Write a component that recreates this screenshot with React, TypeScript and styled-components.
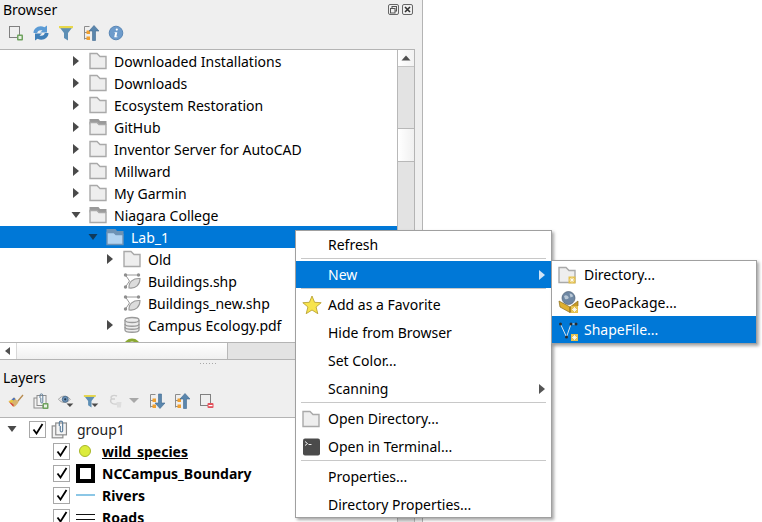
import React from 'react';
import styled, { createGlobalStyle } from 'styled-components';

const GlobalStyle = createGlobalStyle`
  html, body {
    margin: 0;
    padding: 0;
    background: #fff;
  }
  body {
    font-family: 'Noto Sans', 'Open Sans', sans-serif;
    font-size: 14px;
    color: #000;
  }
`;

const Tri = ({ dir = 'right', color = '#4a4a4a' }: { dir?: 'right' | 'down' | 'up' | 'left'; color?: string }) => {
  const pts = {
    right: '1,0 7,5 1,10',
    down: '0.5,1 9.5,1 5,7',
    up: '0.5,6.500 9.500,6.500 5,1.500',
    left: '6,1 1,5 6,9',
  }[dir];
  const horizontal = dir === 'down' || dir === 'up';
  return (
    <svg width={horizontal ? 10 : 8} height={horizontal ? 8 : 10} viewBox={horizontal ? '0 0 10 8' : '0 0 8 10'}>
      <polygon points={pts} fill={color} />
    </svg>
  );
};

const Badge = ({ x, y }: { x: number; y: number }) => (
  <g transform={`translate(${x} ${y})`}>
    <rect width="7" height="7" fill="#e4c04c" />
    <path d="M3.500 1v5M1 3.500h5M1.800 1.800l3.400 3.400M5.200 1.800l-3.400 3.400" stroke="#fff" strokeWidth="0.8" />
  </g>
);

const FolderIcon = ({ badge }: { badge?: boolean }) => (
  <svg width="18" height="18" viewBox="0 0 18 18">
    <path d="M1 1.500h7l3 3h6v12H1z" fill="#eeeeee" stroke="#a9a9a9" strokeWidth="1.400" />
    {badge && <Badge x={10.500} y={10.500} />}
  </svg>
);

const ProjectFolderIcon = ({ selected }: { selected?: boolean }) => (
  <svg width="18" height="18" viewBox="0 0 18 18">
    <path d="M0.500 1h9l1.500 2H17.500v3.500H.5z" fill={selected ? '#6f93b5' : '#9a9a9a'} />
    <path
      d="M1 4.500h7l2 2h7v10H1z"
      fill={selected ? '#b2d3f0' : '#eeeeee'}
      stroke={selected ? '#6f93b5' : '#a9a9a9'}
      strokeWidth="1.400"
    />
  </svg>
);

const ShapeIcon = () => (
  <svg width="18" height="18" viewBox="0 0 18 18">
    <path d="M2.500 3h13M2.500 3l4 6-4 6" fill="none" stroke="#9a9a9a" strokeWidth="1" />
    <path d="M6 16c-.5-6 4-10 11-9.500 0 6-4 10.500-11 9.500z" fill="#dcdcdc" stroke="#9a9a9a" strokeWidth="1.100" />
    <circle cx="2.500" cy="3" r="1.700" fill="#8f8f8f" />
    <circle cx="15.500" cy="3" r="1.700" fill="#8f8f8f" />
    <circle cx="2.500" cy="15" r="1.700" fill="#8f8f8f" />
  </svg>
);

const DbIcon = () => (
  <svg width="18" height="18" viewBox="0 0 18 18" fill="#ececec" stroke="#9a9a9a" strokeWidth="1.300">
    <path d="M2 4v10c0 3 14 3 14 0V4" />
    <ellipse cx="9" cy="4" rx="7" ry="2.500" />
    <path d="M2 8c0 3 14 3 14 0M2 11c0 3 14 3 14 0" fill="none" />
  </svg>
);

const GreenIcon = () => (
  <svg width="18" height="18" viewBox="0 0 18 18">
    <circle cx="9" cy="9" r="7" fill="none" stroke="#8aa832" strokeWidth="3" />
  </svg>
);

const AddLayerIcon = () => (
  <svg width="16" height="16" viewBox="0 0 16 16">
    <rect x="1.500" y="1.500" width="10" height="11" fill="none" stroke="#808080" />
    <rect x="9" y="9.500" width="6" height="6" rx="1" fill="#6fa35f" />
    <rect x="10.500" y="11" width="3" height="3" fill="#e9f2e5" />
  </svg>
);

const RefreshIcon = () => (
  <svg width="16" height="16" viewBox="0 0 16 16">
    <path d="M.5 8C.5 3 6 -.5 11.500 2.200L14 .5V7.500H7l2.500-2C6.500 4.500 4.500 6 4.200 8z" fill="#5b9bd5" />
    <path d="M15.500 8c0 5-5.500 8.500-11 5.800L2 15.500V8.500h7l-2.500 2c3 1 5-.5 5.300-2.500z" fill="#3f7fb8" />
  </svg>
);

const FilterIcon = ({ menu }: { menu?: boolean }) => (
  <svg width={menu ? 20 : 16} height="16" viewBox={menu ? '0 0 20 16' : '0 0 16 16'}>
    <path d="M1 1.500h14L10 8v7.500l-4-2.500V8z" fill="#5e8fb5" />
    <rect x="1" y="1" width="14" height="2.200" fill="#e8d84a" />
    {menu && <polygon points="10,11 18,11 14,15" fill="#4a4a4a" />}
  </svg>
);

const TreeArrowIcon = ({ down }: { down?: boolean }) => (
  <svg width="16" height="16" viewBox="0 0 16 16">
    <path d="M1.500 1.500h5M1.500 1.500v13M1.500 7.500h3M1.500 13.500h3" fill="none" stroke="#8c8c8c" />
    <rect x="3.500" y="5.500" width="3.500" height="3.500" fill="#f0a030" />
    <rect x="3.500" y="11.500" width="3.500" height="3.500" fill="#f0a030" />
    <path
      d={down ? 'M9.500 1h3v9H16l-5 5.500-5-5.500h3.500z' : 'M9.500 15.500h3V6H16L11 .5 6 6h3.500z'}
      fill="#5a86ad"
      stroke="#3f6a90"
      strokeWidth="0.600"
    />
  </svg>
);

const InfoIcon = () => (
  <svg width="16" height="16" viewBox="0 0 16 16">
    <circle cx="8" cy="8" r="6.800" fill="#6d9bcb" stroke="#5a87b6" />
    <circle cx="8.800" cy="4.600" r="1.100" fill="#fff" />
    <path d="M7 7.200h2.300l-.9 4.200h1v.8H6.200l.9-4.200h-.9z" fill="#fff" />
  </svg>
);

const BrushIcon = () => (
  <svg width="16" height="16" viewBox="0 0 16 16">
    <path d="M9 8l5.500-6.500 1 1L10 9z" fill="#b78a4e" />
    <path d="M.5 8c2 0 4.500-2 5.500-3.500l4.500 4.500c-1 2-3.500 5-5 5z" fill="#d7b36f" />
    <path d="M.5 8c2 0 4.500-2 5.500-3.500l1.500 1.500C6 8 4 9.500 2.500 10z" fill="#e8c83c" />
    <path d="M1 9l2.500 1 2.500 2-1 1.500z" fill="#d8443c" />
    <path d="M3.500 6.500l2.500-2 1.500 1.500-2 1.500z" fill="#4a6fc0" />
  </svg>
);

const GroupIcon = ({ plus, size = 16 }: { plus?: boolean; size?: number }) => (
  <svg width={size} height={size} viewBox="0 0 16 16">
    <rect x="1" y="5" width="9" height="10" fill="#f2f2f2" stroke="#8c8c8c" />
    <rect x="4" y="2.500" width="9" height="10" fill="#f5f5f5" stroke="#8c8c8c" />
    <path d="M7 5V2.300a1.400 1.400 0 0 1 2.800 0V9a1 1 0 0 1-2 0V5" fill="none" stroke="#5f7f9c" strokeWidth="1" />
    {plus && (
      <g>
        <rect x="9.500" y="10" width="6" height="6" rx="1" fill="#6fa35f" />
        <rect x="11" y="11.500" width="3" height="3" fill="#e9f2e5" />
      </g>
    )}
  </svg>
);

const EyeIcon = () => (
  <svg width="20" height="16" viewBox="0 0 20 16">
    <path d="M.5 6c4-5 10-5 14 0-4 5-10 5-14 0z" fill="#e5e5e5" stroke="#9a9a9a" />
    <circle cx="8.500" cy="6" r="3.500" fill="#6d93b8" stroke="#47698a" />
    <circle cx="8.500" cy="6" r="1.300" fill="#24384c" />
    <polygon points="10,11 18,11 14,15" fill="#4a4a4a" />
  </svg>
);

const ExprIcon = () => (
  <svg width="32" height="16" viewBox="0 0 32 16">
    <path d="M9 3C5 1.500 2 3 3.500 6H7M3.500 6C1.500 8 3 12 9 11" fill="none" stroke="#cfcfcf" strokeWidth="1.400" />
    <path d="M8.500 9h5l-.6 5.500H9.100z" fill="#dedede" />
    <polygon points="21,5 31,5 26,10" fill="#a8a8a8" />
  </svg>
);

const RemoveIcon = () => (
  <svg width="16" height="16" viewBox="0 0 16 16">
    <rect x="1.500" y="1.500" width="10" height="11" fill="none" stroke="#808080" />
    <rect x="8.500" y="10" width="6" height="5" rx="1" fill="#e2525c" />
    <rect x="9.500" y="12" width="4" height="1.200" fill="#fff" />
  </svg>
);

const StarIcon = () => (
  <svg width="20" height="20" viewBox="0 0 20 20">
    <polygon
      points="10,1 12.600,7.300 19.200,7.700 14.100,12 15.800,18.700 10,15 4.200,18.700 5.900,12 .8,7.700 7.400,7.300"
      fill="#f7e44e"
      stroke="#b39a2a"
      strokeWidth="0.800"
    />
  </svg>
);

const TerminalIcon = () => (
  <svg width="19" height="18" viewBox="0 0 19 18">
    <rect x="1" y="0.500" width="17" height="17" rx="2" fill="#4b4b4b" />
    <path d="M3 3.500l2.500 2-2.500 2" fill="none" stroke="#fff" strokeWidth="0.900" />
    <path d="M6.500 6.500h3" stroke="#fff" strokeWidth="0.900" />
  </svg>
);

const CheckMark = () => (
  <svg width="12" height="12" viewBox="0 0 12 12">
    <path d="M1.500 6.500L4.500 10.500L10.500 1" fill="none" stroke="#000" strokeWidth="1.800" />
  </svg>
);

const GeoPackageIcon = () => (
  <svg width="22" height="22" viewBox="0 0 22 22">
    <circle cx="10.500" cy="7" r="6.500" fill="#6e87a3" stroke="#4f6075" strokeWidth="0.700" />
    <path d="M6 5c2-1.500 3.500-.5 4.500 1s-1.500 3-3.500 2zM11.500 2.500c2 0 3.500 1 3.500 3l-2.500 1z" fill="#b9c8d6" />
    <polygon points="1,10 12,16 12,21.500 2,16" fill="#e0b030" stroke="#8a6c1a" strokeWidth="0.700" />
    <polygon points="12,16 20,10 20,15 12,21.500" fill="#c89a26" stroke="#8a6c1a" strokeWidth="0.700" />
    <Badge x={13} y={15} />
  </svg>
);

const NewShapeIcon = () => (
  <svg width="22" height="22" viewBox="0 0 22 22">
    <path d="M2.500 5l6 13L13 5h5" fill="none" stroke="#d7e3ee" strokeWidth="1" />
    <circle cx="2.500" cy="5" r="1.500" fill="#2b2b2b" />
    <circle cx="8.500" cy="18" r="1.500" fill="#2b2b2b" />
    <circle cx="13" cy="5" r="1.500" fill="#2b2b2b" />
    <circle cx="18" cy="5" r="1.500" fill="#2b2b2b" />
    <Badge x={13} y={15} />
  </svg>
);

const Page = styled.div`
  position: relative;
  width: 762px;
  height: 522px;
  overflow: hidden;
  background: #fff;
`;

const Dock = styled.div`
  width: 422px;
  height: 522px;
  background: #efefef;
  border-right: 1px solid #b4b4b4;
  display: flex;
  flex-direction: column;
`;

const TitleRow = styled.div`
  height: 19px;
  padding: 0 9px 0 3px;
  display: flex;
  align-items: center;
  justify-content: space-between;
  line-height: 19px;
`;

const FloatButtons = styled.div`
  display: flex;
  gap: 3px;
  margin-top: -1px;
`;

const Toolbar = styled.div<{ $gap: number }>`
  box-sizing: border-box;
  height: 30px;
  padding: 0 0 2px 8px;
  display: flex;
  align-items: center;
  gap: ${p => p.$gap}px;
`;

const ToolSlot = styled.span<{ $w: number }>`
  width: ${p => p.$w}px;
  height: 16px;
  flex: none;
  display: flex;
`;

const BrowserArea = styled.div`
  height: 310px;
  margin-right: 7px;
  border-top: 1px solid #b4b4b4;
  border-right: 1px solid #b4b4b4;
  background: #fff;
  display: flex;
  flex-direction: column;
`;

const TreeWithBar = styled.div`
  flex: 1;
  min-height: 0;
  display: flex;
`;

const Tree = styled.div`
  flex: 1;
  overflow: hidden;
  min-width: 0;
`;

const Row = styled.div<{ $depth: number; $selected?: boolean }>`
  height: 22px;
  display: flex;
  align-items: center;
  padding-left: ${p => p.$depth}px;
  white-space: nowrap;
  background: ${p => (p.$selected ? '#0078d7' : 'transparent')};
  color: ${p => (p.$selected ? '#fff' : '#000')};
`;

const Arrow = styled.span`
  width: 14px;
  flex: none;
  display: flex;
  justify-content: center;
`;

const RowIcon = styled.span`
  width: 18px;
  height: 18px;
  flex: none;
  margin: 0 7px 0 6px;
  display: flex;
`;

const VBar = styled.div`
  width: 16px;
  flex: none;
  background: #e3e3e3;
  border-left: 1px solid #b8b8b8;
  display: flex;
  flex-direction: column;
`;

const BarButton = styled.div`
  width: 16px;
  height: 16px;
  flex: none;
  background: linear-gradient(90deg, #fff, #f2f2f2);
  border-bottom: 1px solid #c4c4c4;
  display: flex;
  align-items: center;
  justify-content: center;
`;

const VThumb = styled.div`
  height: 32px;
  margin-top: 61px;
  background: linear-gradient(90deg, #fff, #f0f0f0);
  border-top: 1px solid #b8b8b8;
  border-bottom: 1px solid #b8b8b8;
`;

const HBar = styled.div`
  height: 16px;
  flex: none;
  border-top: 1px solid #b4b4b4;
  border-bottom: 1px solid #b4b4b4;
  background: #e3e3e3;
  display: flex;
`;

const HArrow = styled.div`
  width: 16px;
  background: #fff;
  display: flex;
  align-items: center;
  justify-content: center;
`;

const HThumb = styled.div`
  width: 210px;
  background: linear-gradient(180deg, #fff, #f0f0f0);
  border-left: 1px solid #d8d8d8;
  border-right: 1px solid #b8b8b8;
`;

const Splitter = styled.div`
  box-sizing: border-box;
  height: 8px;
  padding: 3px 206px 0 0;
  display: flex;
  justify-content: flex-end;
  align-items: flex-start;
`;

const GripDots = styled.div`
  width: 16px;
  height: 1px;
  background: repeating-linear-gradient(90deg, #a8a8a8 0 1px, transparent 1px 3px);
`;

const LayerTree = styled.div`
  flex: 1;
  min-height: 0;
  margin-right: 7px;
  border-top: 1px solid #b4b4b4;
  border-right: 1px solid #b4b4b4;
  background: #fff;
  overflow: hidden;
  display: flex;
`;

const LayerList = styled.div`
  flex: 1;
  min-width: 0;
`;

const Check = styled.span`
  width: 15px;
  height: 15px;
  flex: none;
  border: 1px solid #a8a8a8;
  background: #fff;
  display: flex;
  align-items: center;
  justify-content: center;
`;

const GroupLabel = styled.span`
  color: #222;
`;

const LayerLabel = styled.span<{ $current?: boolean }>`
  font-weight: 700;
  text-decoration: ${p => (p.$current ? 'underline' : 'none')};
`;

const LegendSlot = styled.span<{ $w: number }>`
  width: ${p => p.$w}px;
  height: 20px;
  flex: none;
  margin: 0 7px 0 5px;
  display: flex;
  align-items: center;
  justify-content: center;
`;

const LayerRow = styled.div<{ $indent: number }>`
  height: 22px;
  display: flex;
  align-items: center;
  padding-left: ${p => p.$indent}px;
  white-space: nowrap;
`;

const CheckGap = styled.span`
  width: 10px;
  flex: none;
`;

const Dot = styled.span`
  width: 10px;
  height: 10px;
  border-radius: 50%;
  background: #dcec3c;
  border: 1px solid #a8b62a;
`;

const Square = styled.span`
  width: 11px;
  height: 11px;
  border: 4px solid #000;
  background: #fff;
`;

const LineSwatch = styled.span`
  width: 19px;
  height: 2px;
  background: #8cc7e6;
`;

const DoubleLine = styled.span`
  width: 19px;
  height: 4px;
  border-top: 1px solid #111;
  border-bottom: 1px solid #111;
`;

const Menu = styled.div<{ $left: number; $top: number; $width: number; $height?: number }>`
  position: absolute;
  left: ${p => p.$left}px;
  top: ${p => p.$top}px;
  width: ${p => p.$width}px;
  height: ${p => (p.$height ? `${p.$height}px` : 'auto')};
  box-sizing: border-box;
  overflow: hidden;
  background: #fff;
  border: 1px solid #a0a0a0;
  box-shadow: 2px 2px 3px rgba(0, 0, 0, 0.35);
`;

const Item = styled.div<{ $active?: boolean; $height?: number; $lift?: number }>`
  box-sizing: border-box;
  height: ${p => p.$height ?? 28}px;
  display: flex;
  align-items: center;
  padding: 0 0 ${p => p.$lift ?? 2}px 32px;
  position: relative;
  white-space: nowrap;
  background: ${p => (p.$active ? '#0078d7' : 'transparent')};
  color: ${p => (p.$active ? '#fff' : '#000')};
`;

const ItemIcon = styled.span`
  position: absolute;
  left: 6px;
  top: 50%;
  transform: translateY(-50%);
  display: flex;
`;

const SubArrow = styled.span`
  position: absolute;
  right: 5px;
  top: 50%;
  transform: translateY(-50%);
  display: flex;
`;

const SepBox = styled.div`
  position: relative;
  height: 3px;
  margin-top: -1px;
  padding: 0 5px;
  background: #fff;
`;

const SepLine = styled.div`
  height: 1px;
  background: #c8c8c8;
`;

const folderRows = [
  ['Downloaded Installations', 'folder'],
  ['Downloads', 'folder'],
  ['Ecosystem Restoration', 'folder'],
  ['GitHub', 'project'],
  ['Inventor Server for AutoCAD', 'folder'],
  ['Millward', 'folder'],
  ['My Garmin', 'folder'],
] as const;

const layers = [
  { name: 'wild_species', swatch: <Dot />, current: true },
  { name: 'NCCampus_Boundary', swatch: <Square /> },
  { name: 'Rivers', swatch: <LineSwatch /> },
  { name: 'Roads', swatch: <DoubleLine /> },
];

const Sep = () => (
  <SepBox>
    <SepLine />
  </SepBox>
);

export default function App() {
  return (
    <Page>
      <GlobalStyle />
      <Dock>
        <TitleRow>
          <span>Browser</span>
          <FloatButtons>
            <svg width="11" height="11" viewBox="0 0 11 11">
              <rect x="0.500" y="0.500" width="10" height="10" rx="1.500" fill="none" stroke="#666" />
              <rect x="4" y="2.500" width="4.500" height="4.500" fill="none" stroke="#555" />
              <rect x="2.500" y="4.500" width="4.500" height="4.500" fill="#efefef" stroke="#555" />
            </svg>
            <svg width="11" height="11" viewBox="0 0 11 11">
              <rect x="0.500" y="0.500" width="10" height="10" rx="1.500" fill="none" stroke="#666" />
              <path d="M3 3l5 5M8 3l-5 5" stroke="#333" strokeWidth="1.600" />
            </svg>
          </FloatButtons>
        </TitleRow>
        <Toolbar $gap={9}>
          <AddLayerIcon />
          <RefreshIcon />
          <FilterIcon />
          <TreeArrowIcon />
          <InfoIcon />
        </Toolbar>
        <BrowserArea>
          <TreeWithBar>
            <Tree>
              {folderRows.map(([name, kind]) => (
                <Row key={name} $depth={69}>
                  <Arrow>
                    <Tri />
                  </Arrow>
                  <RowIcon>{kind === 'folder' ? <FolderIcon /> : <ProjectFolderIcon />}</RowIcon>
                  {name}
                </Row>
              ))}
              <Row $depth={69}>
                <Arrow>
                  <Tri dir="down" />
                </Arrow>
                <RowIcon>
                  <ProjectFolderIcon />
                </RowIcon>
                Niagara College
              </Row>
              <Row $depth={86} $selected>
                <Arrow>
                  <Tri dir="down" color="#0f3a5c" />
                </Arrow>
                <RowIcon>
                  <ProjectFolderIcon selected />
                </RowIcon>
                Lab_1
              </Row>
              <Row $depth={103}>
                <Arrow>
                  <Tri />
                </Arrow>
                <RowIcon>
                  <FolderIcon />
                </RowIcon>
                Old
              </Row>
              <Row $depth={103}>
                <Arrow />
                <RowIcon>
                  <ShapeIcon />
                </RowIcon>
                Buildings.shp
              </Row>
              <Row $depth={103}>
                <Arrow />
                <RowIcon>
                  <ShapeIcon />
                </RowIcon>
                Buildings_new.shp
              </Row>
              <Row $depth={103}>
                <Arrow>
                  <Tri />
                </Arrow>
                <RowIcon>
                  <DbIcon />
                </RowIcon>
                Campus Ecology.pdf
              </Row>
              <Row $depth={103}>
                <Arrow />
                <RowIcon>
                  <GreenIcon />
                </RowIcon>
              </Row>
            </Tree>
            <VBar>
              <BarButton>
                <Tri dir="up" color="#505050" />
              </BarButton>
              <VThumb />
            </VBar>
          </TreeWithBar>
          <HBar>
            <HArrow>
              <Tri dir="left" color="#505050" />
            </HArrow>
            <HThumb />
          </HBar>
        </BrowserArea>
        <Splitter>
          <GripDots />
        </Splitter>
        <TitleRow>
          <span>Layers</span>
        </TitleRow>
        <Toolbar $gap={8}>
          <ToolSlot $w={17}>
            <BrushIcon />
          </ToolSlot>
          <ToolSlot $w={17}>
            <GroupIcon plus />
          </ToolSlot>
          <ToolSlot $w={17}>
            <EyeIcon />
          </ToolSlot>
          <ToolSlot $w={17}>
            <FilterIcon menu />
          </ToolSlot>
          <ToolSlot $w={33}>
            <ExprIcon />
          </ToolSlot>
          <ToolSlot $w={17}>
            <TreeArrowIcon down />
          </ToolSlot>
          <ToolSlot $w={17}>
            <TreeArrowIcon />
          </ToolSlot>
          <ToolSlot $w={17}>
            <RemoveIcon />
          </ToolSlot>
        </Toolbar>
        <LayerTree>
          <LayerList>
            <LayerRow $indent={5}>
              <Arrow>
                <Tri dir="down" />
              </Arrow>
              <CheckGap />
              <Check>
                <CheckMark />
              </Check>
              <LegendSlot $w={19}>
                <GroupIcon size={19} />
              </LegendSlot>
              <GroupLabel>group1</GroupLabel>
            </LayerRow>
            {layers.map(layer => (
              <LayerRow key={layer.name} $indent={53}>
                <Check>
                  <CheckMark />
                </Check>
                <LegendSlot $w={20}>{layer.swatch}</LegendSlot>
                <LayerLabel $current={layer.current}>{layer.name}</LayerLabel>
              </LayerRow>
            ))}
          </LayerList>
          <VBar />
        </LayerTree>
      </Dock>

      <Menu $left={295} $top={230} $width={257} $height={288}>
        <Item>Refresh</Item>
        <Sep />
        <Item $active>
          New
          <SubArrow>
            <Tri color="#cfe4f7" />
          </SubArrow>
        </Item>
        <Sep />
        <Item>
          <ItemIcon>
            <StarIcon />
          </ItemIcon>
          Add as a Favorite
        </Item>
        <Item>Hide from Browser</Item>
        <Item>Set Color...</Item>
        <Item>
          Scanning
          <SubArrow>
            <Tri color="#555" />
          </SubArrow>
        </Item>
        <Sep />
        <Item>
          <ItemIcon>
            <FolderIcon />
          </ItemIcon>
          Open Directory...
        </Item>
        <Item>
          <ItemIcon>
            <TerminalIcon />
          </ItemIcon>
          Open in Terminal...
        </Item>
        <Sep />
        <Item>Properties...</Item>
        <Item>Directory Properties...</Item>
      </Menu>

      <Menu $left={551} $top={260} $width={206}>
        <Item $height={27} $lift={0}>
          <ItemIcon>
            <FolderIcon badge />
          </ItemIcon>
          Directory...
        </Item>
        <Item $lift={0}>
          <ItemIcon>
            <GeoPackageIcon />
          </ItemIcon>
          GeoPackage...
        </Item>
        <Item $height={27} $lift={0} $active>
          <ItemIcon>
            <NewShapeIcon />
          </ItemIcon>
          ShapeFile...
        </Item>
      </Menu>
    </Page>
  );
}
